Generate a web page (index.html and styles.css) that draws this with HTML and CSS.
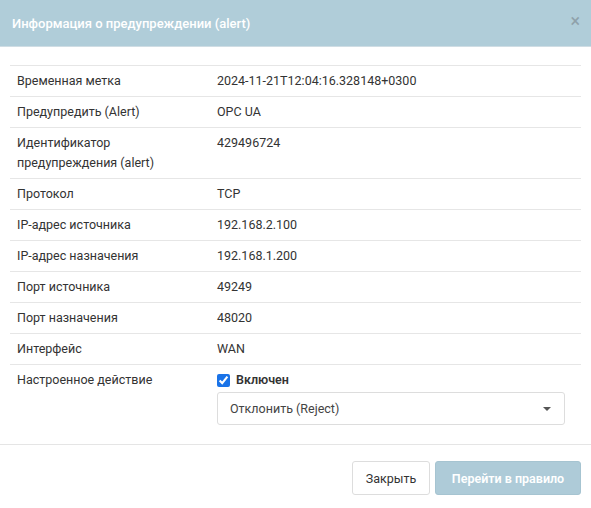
FILE: index.html
```html
<!DOCTYPE html>
<html lang="ru">
<head>
<meta charset="utf-8">
<title>Alert</title>
<link rel="stylesheet" href="styles.css">
</head>
<body>
<div class="modal">
  <div class="modal-header">
    <span class="modal-title">Информация о предупреждении (alert)</span>
    <span class="close">×</span>
  </div>
  <div class="modal-body">
    <table class="info">
      <tr><td class="lbl">Временная метка</td><td>2024-11-21T12:04:16.328148+0300</td></tr>
      <tr><td class="lbl">Предупредить (Alert)</td><td>OPC UA</td></tr>
      <tr><td class="lbl">Идентификатор<br>предупреждения (alert)</td><td>429496724</td></tr>
      <tr><td class="lbl">Протокол</td><td>TCP</td></tr>
      <tr><td class="lbl">IP-адрес источника</td><td>192.168.2.100</td></tr>
      <tr><td class="lbl">IP-адрес назначения</td><td>192.168.1.200</td></tr>
      <tr><td class="lbl">Порт источника</td><td>49249</td></tr>
      <tr><td class="lbl">Порт назначения</td><td>48020</td></tr>
      <tr><td class="lbl">Интерфейс</td><td>WAN</td></tr>
      <tr class="last">
        <td class="lbl">Настроенное действие</td>
        <td>
          <label class="check"><input type="checkbox" checked><span>Включен</span></label>
          <div class="select"><span>Отклонить (Reject)</span><span class="caret"></span></div>
        </td>
      </tr>
    </table>
  </div>
  <div class="modal-footer">
    <button class="btn btn-default">Закрыть</button>
    <button class="btn btn-primary">Перейти в правило</button>
  </div>
</div>
</body>
</html>
```
FILE: styles.css
```css
html, body {
  margin: 0;
  padding: 0;
  background: #ffffff;
}
body {
  font-family: Roboto, "Liberation Sans", sans-serif;
  font-size: 12.5px;
  color: #333333;
}
.modal-header {
  height: 47px;
  box-sizing: border-box;
  background: #b0cdd9;
  border-bottom: 1px solid #cfdde4;
  display: flex;
  align-items: center;
  justify-content: space-between;
  padding: 0 11px 0 12px;
}
.modal-title {
  color: #ffffff;
  font-size: 13px;
  font-weight: 500;
}
.close {
  color: #8fa1aa;
  font-size: 18px;
  line-height: 1;
  margin-top: -4px;
}
.modal-body {
  padding: 18px 10px 14px 10px;
}
.info {
  width: 100%;
  border-collapse: collapse;
}
.info td {
  border-top: 1px solid #e6e6e6;
  padding: 5px 7px;
  line-height: 20px;
  vertical-align: top;
}
.info td.lbl {
  width: 186px;
}
.check {
  display: flex;
  align-items: center;
  height: 20px;
  font-weight: 600;
  color: #333;
}
.check input {
  margin: 0 6px 0 0;
  width: 13px;
  height: 13px;
  accent-color: #1a73e8;
}
.select {
  margin-top: 2px;
  width: 348px;
  height: 33px;
  box-sizing: border-box;
  border: 1px solid #dddddd;
  border-radius: 3px;
  display: flex;
  align-items: center;
  justify-content: space-between;
  padding: 0 13px 0 12px;
  color: #444;
}
.caret {
  width: 0;
  height: 0;
  border-left: 4px solid transparent;
  border-right: 4px solid transparent;
  border-top: 4px solid #555;
}
.modal-footer {
  border-top: 1px solid #e5e5e5;
  padding: 16px 10px 13px;
  display: flex;
  justify-content: flex-end;
  gap: 5px;
}
.btn {
  font-family: inherit;
  font-size: 12.5px;
  height: 34px;
  border-radius: 3px;
  padding: 0 12px;
  cursor: pointer;
}
.btn-default {
  width: 78px;
  background: #fff;
  border: 1px solid #dddddd;
  color: #333;
}
.btn-primary {
  width: 146px;
  background: #aecbd8;
  border: 1px solid #a6c4d1;
  color: #ffffff;
  font-weight: 600;
}
```
